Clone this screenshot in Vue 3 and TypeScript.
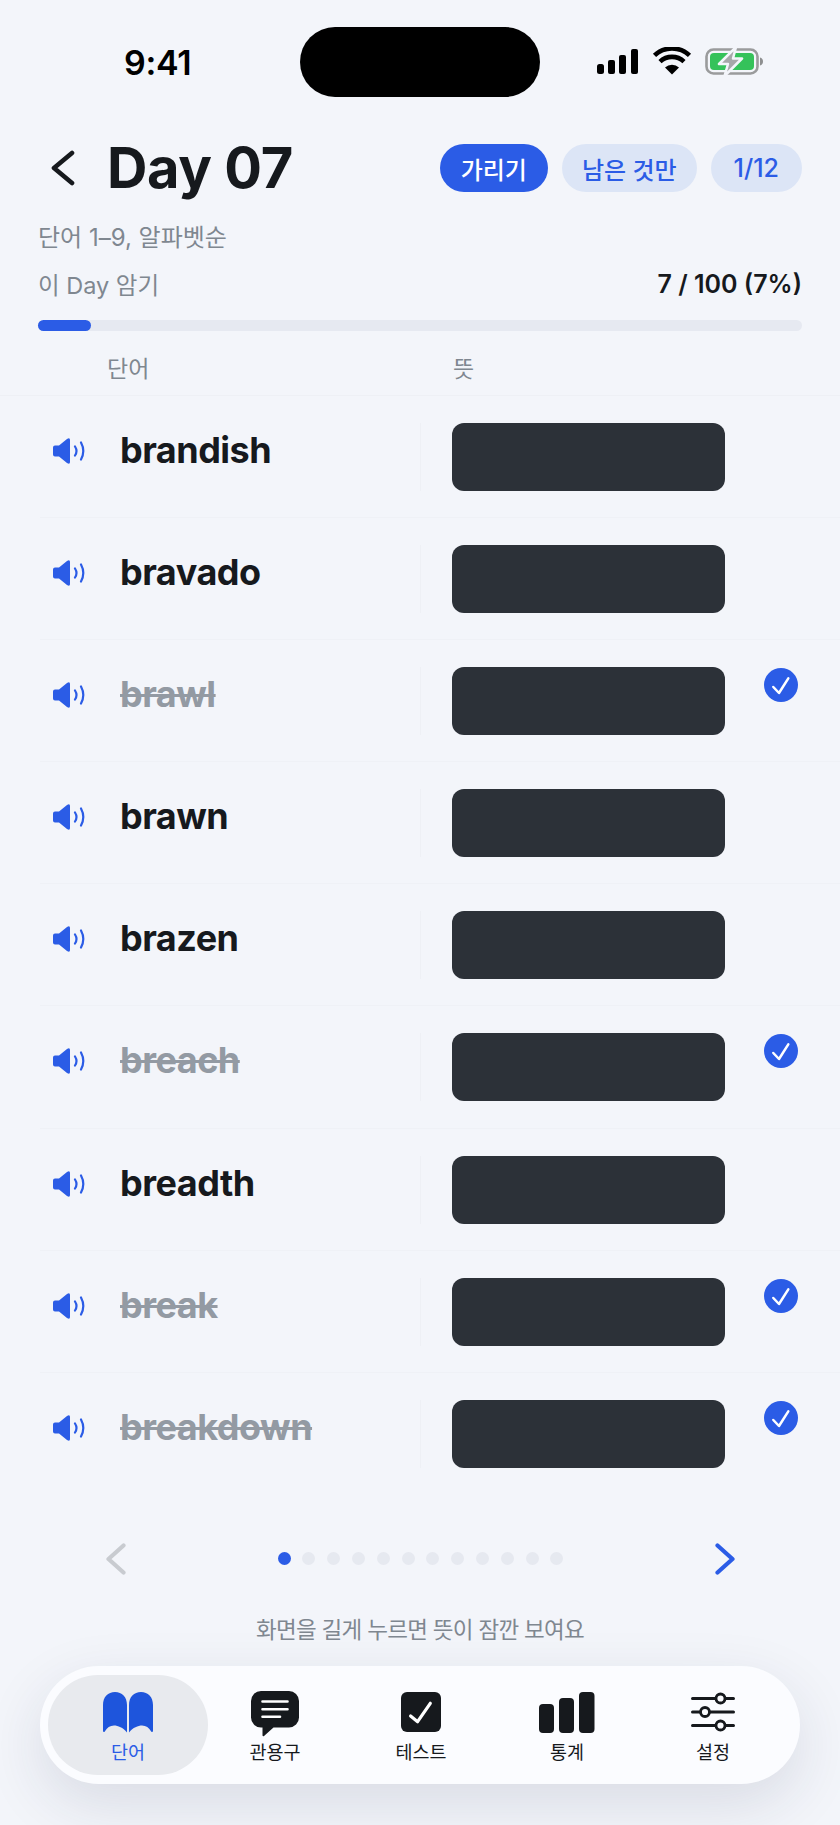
<script setup lang="ts">
interface Word {
  text: string;
  done: boolean;
}

const words: Word[] = [
  { text: "brandish", done: false },
  { text: "bravado", done: false },
  { text: "brawl", done: true },
  { text: "brawn", done: false },
  { text: "brazen", done: false },
  { text: "breach", done: true },
  { text: "breadth", done: false },
  { text: "break", done: true },
  { text: "breakdown", done: true },
];
const dots = Array.from({ length: 12 }, (_, i) => i);
</script>

<template>
  <div class="screen">
    <!-- status bar -->
    <div class="status">
      <span class="time">9:41</span>
      <div class="island"></div>
      <svg class="status-icons" width="168" height="30" viewBox="0 0 168 30">
        <g fill="#000">
          <rect x="2" y="17" width="7" height="10" rx="2.5" />
          <rect x="13" y="13" width="7" height="14" rx="2" />
          <rect x="24" y="8" width="7" height="19" rx="2" />
          <rect x="36" y="2" width="7" height="25" rx="2" />
          <path d="M77 27.5 70 20.4a10.5 10.5 0 0 1 14 0z" />
        </g>
        <g fill="none" stroke="#000" stroke-width="4.6">
          <path d="M65 14.6a17.5 17.5 0 0 1 24 0" />
          <path d="M59.5 8.4a25.5 25.5 0 0 1 35 0" />
        </g>
        <rect x="111.5" y="2.5" width="51" height="24" rx="7" fill="none" stroke="#9a9b9c" stroke-width="2.6" />
        <rect x="115" y="6" width="44" height="17" rx="4" fill="#35c25a" />
        <path d="M165 10.5c2 .6 3 2 3 4s-1 3.4-3 4z" fill="#8e8f90" />
        <path
          d="M141 0 124 17h9l-3.5 12 17.500-17.500h-9z"
          fill="#a6a7a9"
          stroke="#f3f5fa"
          stroke-width="2.5"
          stroke-linejoin="round"
        />
      </svg>
    </div>

    <!-- title -->
    <div class="title-row">
      <svg class="back" width="24" height="36" viewBox="0 0 24 36">
        <path d="M21 3 3 18 21 33" fill="none" stroke="#16191d" stroke-width="4.6" stroke-linecap="round" stroke-linejoin="round" />
      </svg>
      <h1 class="title">Day 07</h1>
      <div class="chips">
        <span class="chip on">가리기</span>
        <span class="chip rest">남은 것만</span>
        <span class="chip num">1/12</span>
      </div>
    </div>

    <div class="meta">단어 1–9, 알파벳순</div>
    <div class="meta progress-label">
      <span>이 Day 암기</span>
      <span class="count">7 / 100 (7%)</span>
    </div>
    <div class="bar"><div class="fill" :style="{ width: '7%' }"></div></div>

    <div class="col-head">
      <span class="col-word">단어</span>
      <span class="col-mean">뜻</span>
    </div>

    <!-- word rows -->
    <div class="rows">
      <div v-for="w in words" :key="w.text" class="row">
        <svg class="speaker" width="32" height="26" viewBox="0 0 32 26">
          <path d="M0 9.5Q0 7.5 2 7.5H6L14 1Q17-.8 17 2V24Q17 26.8 14 25L6 18.5H2Q0 18.5 0 16.5Z" fill="#2b5ce6" />
          <path d="M22 8.5q3 4.5 0 9M28 4.5q4.6 8.5 0 17" fill="none" stroke="#2b5ce6" stroke-width="2.2" stroke-linecap="round" />
        </svg>
        <span class="word" :class="{ done: w.done }">{{ w.text }}</span>
        <div class="mean">
          <div class="mask"></div>
          <svg v-if="w.done" class="check" width="34" height="34" viewBox="0 0 34 34">
            <circle cx="17" cy="17" r="17" fill="#2b5ce6" />
            <path d="M9.3 19 15 25 24.3 10.3" fill="none" stroke="#fff" stroke-width="2.5" stroke-linecap="round" stroke-linejoin="round" />
          </svg>
        </div>
      </div>
    </div>

    <!-- pager -->
    <div class="pager">
      <svg width="20" height="32" viewBox="0 0 20 32">
        <path d="M17.5 2.5 2.5 16 17.5 29.5" fill="none" stroke="#c8cbd0" stroke-width="4.2" stroke-linecap="round" stroke-linejoin="round" />
      </svg>
      <div class="dots">
        <span v-for="d in dots" :key="d" class="dot" :class="{ on: d === 0 }"></span>
      </div>
      <svg width="20" height="32" viewBox="0 0 20 32">
        <path d="M2.5 2.5 17.5 16 2.5 29.5" fill="none" stroke="#2b5ce6" stroke-width="4.2" stroke-linecap="round" stroke-linejoin="round" />
      </svg>
    </div>
    <div class="hint">화면을 길게 누르면 뜻이 잠깐 보여요</div>

    <!-- tab bar -->
    <nav class="tabs">
      <div class="tab active">
        <div class="ico">
          <svg width="50" height="41" viewBox="0 0 50 41">
            <path d="M0 13C0 5 5 0 12 0S24 5 24 13V40.5C20 35.5 15 33.5 11 33.5 7 33.5 4 35.5 1.8 39.5 1 40.5 0 40 0 38.5Z" fill="#1e55dc" />
            <path d="M50 13C50 5 45 0 38 0S26 5 26 13V40.5C30 35.5 35 33.5 39 33.5 43 33.5 46 35.5 48.2 39.5 49 40.5 50 40 50 38.5Z" fill="#1e55dc" />
          </svg>
        </div>
        <span>단어</span>
      </div>
      <div class="tab">
        <div class="ico">
          <svg class="chat" width="48" height="46" viewBox="0 0 48 46">
            <path d="M10 0H38A10 10 0 0 1 48 10V26.5A10 10 0 0 1 38 36.5H22.5L13 45Q11.5 46 11.5 44V36.5H10A10 10 0 0 1 0 26.5V10A10 10 0 0 1 10 0Z" fill="#16191d" />
            <path d="M11.5 10.5H36.5M11.5 18.2H36.5M11.5 25.8H29" stroke="#fff" stroke-width="2.6" stroke-linecap="round" />
          </svg>
        </div>
        <span>관용구</span>
      </div>
      <div class="tab">
        <div class="ico">
          <svg width="40" height="40" viewBox="0 0 40 40">
            <rect width="40" height="40" rx="6" fill="#16191d" />
            <path d="M9.6 24 16.6 29.7 29.3 11.3" fill="none" stroke="#fff" stroke-width="3.2" stroke-linecap="round" stroke-linejoin="round" />
          </svg>
        </div>
        <span>테스트</span>
      </div>
      <div class="tab">
        <div class="ico">
          <svg width="56" height="41" viewBox="0 0 56 41">
            <rect x="0" y="12" width="15" height="29" rx="4" fill="#16191d" />
            <rect x="20" y="6" width="15" height="35" rx="4" fill="#16191d" />
            <rect x="40" y="0" width="15.5" height="41" rx="4" fill="#16191d" />
          </svg>
        </div>
        <span>통계</span>
      </div>
      <div class="tab">
        <div class="ico">
          <svg width="44" height="40" viewBox="0 0 44 40">
            <path d="M1.5 6.5H42.5M1.5 20H42.5M1.5 33.5H42.5" stroke="#16191d" stroke-width="3" stroke-linecap="round" />
            <circle cx="29.5" cy="6.5" r="4.5" fill="#fbfcff" stroke="#16191d" stroke-width="2.8" />
            <circle cx="14" cy="20" r="4.5" fill="#fbfcff" stroke="#16191d" stroke-width="2.8" />
            <circle cx="29.5" cy="33.5" r="4.5" fill="#fbfcff" stroke="#16191d" stroke-width="2.8" />
          </svg>
        </div>
        <span>설정</span>
      </div>
    </nav>
  </div>
</template>

<style scoped>
.screen {
  width: 840px;
  height: 1825px;
  overflow: hidden;
  background: #f3f5fa;
  color: #16191d;
  font-family: Inter, "Noto Sans CJK KR", sans-serif;
}

/* status bar */
.status {
  display: flex;
  align-items: center;
  height: 70px;
  padding: 27px 0 0 124px;
}
.time {
  width: 176px;
  color: #000;
  font-size: 34px;
  font-weight: 600;
  letter-spacing: -0.3px;
}
.island {
  width: 240px;
  height: 70px;
  border-radius: 35px;
  background: #000;
}
.status-icons {
  margin-left: 55px;
  flex: none;
}

/* title */
.title-row {
  display: flex;
  align-items: center;
  height: 48px;
  margin-top: 47px;
  padding: 0 38px 0 51px;
}
.back {
  flex: none;
}
.title {
  margin: 0 0 0 32px;
  font-size: 56px;
  font-weight: 700;
  line-height: 48px;
  letter-spacing: -0.4px;
}
.chips {
  display: flex;
  gap: 14px;
  margin-left: auto;
}
.chip {
  display: flex;
  align-items: center;
  height: 48px;
  padding: 0 21px;
  border-radius: 24px;
  background: #dce5f6;
  color: #2b5ce6;
  font-size: 24px;
  font-weight: 500;
}
.chip.on {
  background: #2b5ce6;
  color: #fff;
}
.chip.rest {
  padding: 0 20px;
}
.chip.num {
  padding: 0 23px;
  font-size: 25px;
}

.meta {
  display: flex;
  align-items: center;
  height: 48px;
  margin-top: 19px;
  padding: 0 38px;
  color: #7f8790;
  font-size: 24px;
}
.progress-label {
  justify-content: space-between;
  margin-top: 1px;
  font-size: 23.5px;
}
.count {
  color: #16191d;
  font-size: 25px;
  font-weight: 600;
}
.bar {
  height: 11px;
  margin: 12px 38px 0;
  border-radius: 6px;
  background: #e6e9f1;
}
.fill {
  height: 100%;
  border-radius: 6px;
  background: #2b5ce6;
}

.col-head {
  display: flex;
  align-items: center;
  box-sizing: border-box;
  height: 56px;
  margin-top: 9px;
  padding-bottom: 2px;
  border-bottom: 1px solid #eef0f5;
  color: #7f8790;
  font-size: 23px;
}
.col-word {
  width: 346px;
  margin-left: 107px;
}

/* word rows */
.row {
  display: flex;
  align-items: flex-start;
  box-sizing: border-box;
  height: 122.1px;
  margin-left: 40px;
  padding-top: 27px;
  border-bottom: 1px solid #eff1f6;
}
.row:last-child {
  border-bottom: none;
}
.speaker {
  flex: none;
  margin: 15px 0 0 13px;
}
.word {
  width: 300px;
  margin-left: 35px;
  font-size: 36px;
  font-weight: 700;
  line-height: 54px;
  letter-spacing: -0.5px;
}
.word.done {
  color: #939aa3;
  text-decoration: line-through;
  text-decoration-thickness: 3px;
}
.mean {
  display: flex;
  align-items: flex-start;
  border-left: 1px solid #eef0f5;
  padding-left: 31px;
}
.mask {
  width: 273px;
  height: 68px;
  border-radius: 12px;
  background: #2c3138;
}
.check {
  margin: 1px 0 0 39px;
}

/* pager */
.pager {
  display: flex;
  align-items: center;
  justify-content: space-between;
  height: 60px;
  margin-top: 34px;
  padding: 0 105px 0 106px;
}
.dots {
  display: flex;
  gap: 11.8px;
}
.dot {
  width: 13px;
  height: 13px;
  border-radius: 50%;
  background: #e6e9f0;
}
.dot.on {
  background: #2b5ce6;
}
.hint {
  height: 40px;
  margin-top: 21px;
  color: #7f8790;
  font-size: 22.5px;
  line-height: 40px;
  letter-spacing: -0.7px;
  text-align: center;
}

/* tab bar */
.tabs {
  display: flex;
  box-sizing: border-box;
  width: 760px;
  height: 118px;
  margin: 16px 0 0 40px;
  padding: 9px 0 9px 8px;
  border-radius: 59px;
  background: #fbfcff;
  box-shadow: 0 20px 60px rgba(30, 40, 70, 0.12);
}
.tab {
  display: flex;
  flex: 0 0 146px;
  flex-direction: column;
  align-items: center;
  padding-top: 17px;
  font-size: 18.5px;
  font-weight: 400;
  line-height: 24px;
}
.ico {
  height: 48px;
}
.ico svg {
  display: block;
}
.chat {
  margin-top: -1px;
}
.tab.active {
  flex-basis: 160px;
  margin-right: -6px;
  border-radius: 50px;
  background: #e8eaee;
  color: #2b5ce6;
}
</style>
